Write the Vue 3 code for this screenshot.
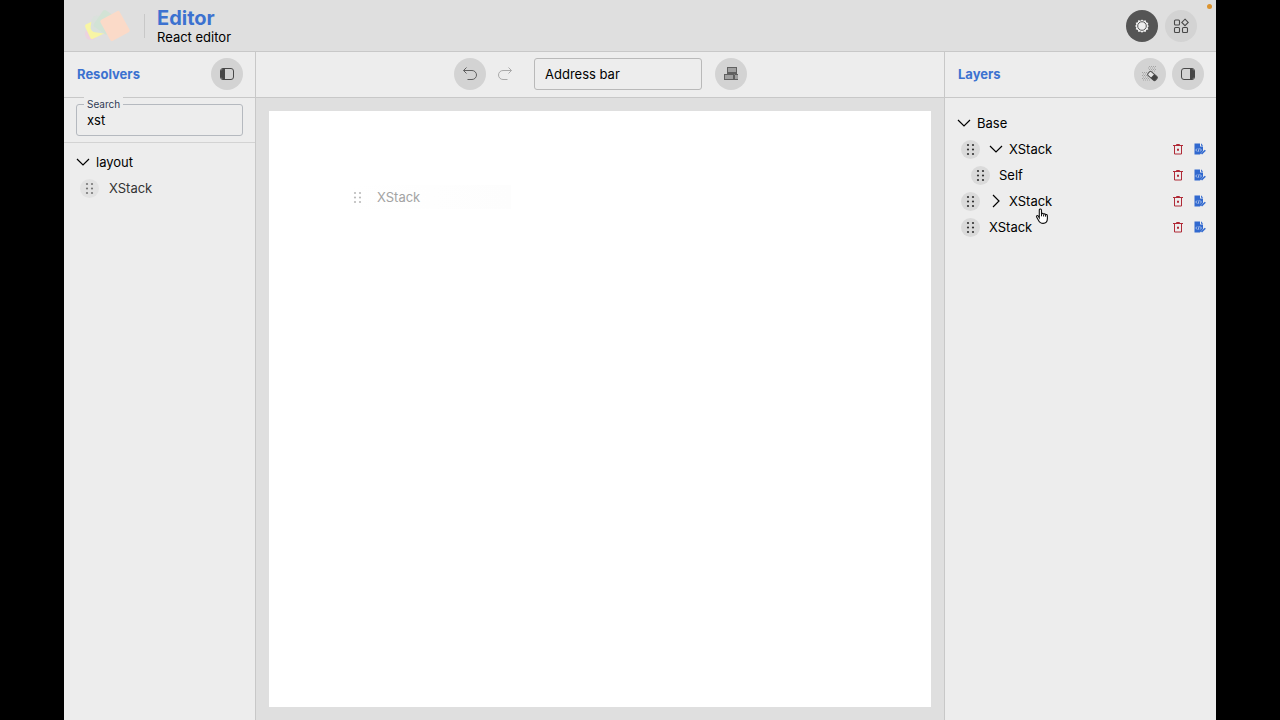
<script setup>
import { ref } from 'vue'

const search = ref('xst')
const address = ref('Address bar')
const layers = [
  { id: 1, name: 'XStack', depth: 1, toggle: 'down' },
  { id: 2, name: 'Self', depth: 2, toggle: null },
  { id: 3, name: 'XStack', depth: 1, toggle: 'right' },
  { id: 4, name: 'XStack', depth: 1, toggle: null },
]
const dots = [[5, 3], [10, 3], [5, 7.5], [10, 7.5], [5, 12], [10, 12]]
</script>

<template>
  <div class="stage">
    <div class="app">
      <header class="top">
        <svg class="logo" viewBox="0 0 50 36" aria-hidden="true">
          <circle cx="8" cy="26" r="6" fill="#ecd2df" />
          <rect x="4" y="13" width="17" height="16" rx="2" fill="#f8f5a4" transform="rotate(-25 12 21)" />
          <rect x="8" y="8" width="17" height="17" rx="5" fill="#dae1dc" transform="rotate(8 17 17)" />
          <rect x="14" y="4" width="17" height="20" rx="2" fill="#d2e3d5" transform="rotate(35 22 14)" />
          <rect x="21" y="6" width="22" height="24" rx="2" fill="#fbdac8" transform="rotate(-29 32 18)" />
        </svg>
        <div class="brand">
          <h1>Editor</h1>
          <p>React editor</p>
        </div>
        <div class="actions">
          <button class="round dark" aria-label="Theme">
            <svg width="16" height="16" viewBox="0 0 16 16" fill="none" stroke="currentColor">
              <path d="M8 1.4l1.5 1.4 2.1-.6.6 2.100 2.100.6-.6 2L15 8l-1.300 1.300.6 2.100-2.100.6-.6 2.100-2.100-.6L8 14.700l-1.500-1.300-2.100.6-.6-2.100-2.100-.6.6-2.100L1 8l1.300-1.200-.6-2 2.100-.6.6-2.100 2.100.6z" fill="currentColor" stroke="none" />
              <circle cx="8" cy="8" r="4.300" fill="#eee" stroke="#555" stroke-width="1" />
            </svg>
          </button>
          <button class="round" aria-label="Components">
            <svg width="16" height="16" viewBox="0 0 16 16" fill="none" stroke="currentColor" stroke-width="1.1">
              <rect x="1.5" y="2" width="5" height="5" rx="1" />
              <rect x="1.5" y="9.5" width="5" height="5" rx="1" />
              <rect x="9.5" y="9.5" width="5" height="5" rx="1" />
              <path d="M12 1.200l3.200 3.200L12 7.600 8.800 4.400z" />
            </svg>
          </button>
        </div>
        <span class="indicator"></span>
      </header>

      <div class="body">
        <aside class="panel left">
          <div class="bar">
            <h2>Resolvers</h2>
            <button class="round" aria-label="Toggle resolvers panel">
              <svg width="16" height="14" viewBox="0 0 16 14">
                <path d="M4 1.5h2v11H4L1.500 10V4z" fill="currentColor" />
                <rect x="1.5" y="1.5" width="13" height="11" rx="2.5" fill="none" stroke="currentColor" />
              </svg>
            </button>
          </div>
          <div class="filter">
            <div class="field">
              <label for="search">Search</label>
              <input id="search" v-model="search" type="text" />
            </div>
          </div>
          <div class="tree resolvers">
            <button class="row">
              <svg class="chev" viewBox="0 0 14 14"><path d="M1 4l6 6 6-6" /></svg>
              <span>layout</span>
            </button>
            <div class="row item faded">
              <span class="handle"><svg viewBox="0 0 15 15"><circle v-for="(d, i) in dots" :key="i" :cx="d[0]" :cy="d[1]" r="1.1" /></svg></span>
              <span class="name">XStack</span>
            </div>
          </div>
        </aside>

        <main class="center">
          <div class="bar tools">
            <button class="round" aria-label="Undo">
              <svg width="16" height="16" viewBox="0 0 16 16" fill="none" stroke="currentColor"><path d="M4.500 1.500l-3 3 3 3M1.500 4.500H10a4.500 4.500 0 0 1 0 9H5.500" /></svg>
            </button>
            <button class="plain" aria-label="Redo" disabled>
              <svg width="16" height="16" viewBox="0 0 16 16" fill="none" stroke="currentColor"><path d="M11.500 1.500l3 3-3 3M14.500 4.500H6a4.500 4.500 0 0 0 0 9h4.500" /></svg>
            </button>
            <input v-model="address" class="address" type="text" aria-label="Address" />
            <button class="round" aria-label="Viewport">
              <svg width="16" height="16" viewBox="0 0 16 16" fill="#a0a0a0" stroke="currentColor">
                <rect x="4.5" y="1.5" width="9" height="5" />
                <path d="M4 7.500h10" />
                <rect x="1.5" y="8.5" width="9" height="5" />
                <path d="M15 8.500h-3.500v5H15M1 13.500h14" />
              </svg>
            </button>
          </div>
          <div class="workspace">
            <div class="canvas">
              <div class="ghost">
                <svg viewBox="0 0 15 15"><circle v-for="(d, i) in dots" :key="i" :cx="d[0]" :cy="d[1]" r="1.1" /></svg>
                <span>XStack</span>
              </div>
            </div>
          </div>
        </main>

        <aside class="panel right">
          <div class="bar">
            <h2>Layers</h2>
            <div class="pair">
              <button class="round" aria-label="Clear layers">
                <svg width="16" height="16" viewBox="0 0 16 16">
                  <path d="M7 .5h8M6 2h8M7 3.500h8M10 5h4M0 6.500h5M1 8h4M0 9.500h5M1 11h6M0 12.500h7M1 14h7" fill="none" stroke="#999" stroke-width=".8" stroke-dasharray="1 1" />
                  <rect x="5.5" y="7.5" width="10" height="5" rx="1.500" fill="#e5e5e5" stroke="#505050" transform="rotate(42 10.500 10)" />
                  <path d="M10.500 7.500H14A1.500 1.500 0 0 1 15.500 9v2a1.500 1.500 0 0 1-1.500 1.500h-3.500z" fill="#444" transform="rotate(42 10.500 10)" />
                </svg>
              </button>
              <button class="round" aria-label="Toggle layers panel">
                <svg width="16" height="14" viewBox="0 0 16 14">
                  <path d="M10 1.500h2l2.500 2.500v6L12 12.500h-2z" fill="currentColor" />
                  <rect x="1.5" y="1.5" width="13" height="11" rx="2.5" fill="none" stroke="currentColor" />
                </svg>
              </button>
            </div>
          </div>
          <div class="tree layers">
            <button class="row">
              <svg class="chev" viewBox="0 0 14 14"><path d="M1 4l6 6 6-6" /></svg>
              <span>Base</span>
            </button>
            <div v-for="l in layers" :key="l.id" class="row item" :class="{ nested: l.depth === 2 }">
              <span class="handle"><svg viewBox="0 0 15 15"><circle v-for="(d, i) in dots" :key="i" :cx="d[0]" :cy="d[1]" r="1.1" /></svg></span>
              <button v-if="l.toggle" class="toggle" aria-label="Toggle layer">
                <svg class="chev" viewBox="0 0 14 14"><path :d="l.toggle === 'down' ? 'M1 4l6 6 6-6' : 'M4 1l6 6-6 6'" /></svg>
              </button>
              <span class="name">{{ l.name }}</span>
              <button class="mini red" aria-label="Delete layer">
                <svg viewBox="0 0 12 12" fill="none" stroke="currentColor"><path d="M1 2.500h10M4.500 2.500v-1h3v1M2.500 3v8h7V3" /><path d="M5 5.800h2v2H5z" fill="currentColor" stroke="none" /></svg>
              </button>
              <button class="mini blue" aria-label="Edit layer">
                <svg viewBox="0 0 12 12"><path d="M.5.500h5.500v3h3V8L6 11.500H.5z" fill="currentColor" /><path d="M7 .3L9.200 2.700H7z" fill="currentColor" /><path d="M3 5.500L1.800 7 3 8.500M6.200 5.500L7.400 7 6.200 8.500M5.100 5.200l-.9 3.600" fill="none" stroke="#dbe4f5" stroke-width=".7" /><path d="M7.500 11L11.300 7.200" fill="none" stroke="currentColor" stroke-width="1.600" /></svg>
              </button>
            </div>
            <svg class="cursor" viewBox="0 0 14 18" aria-hidden="true">
              <path d="M4.300 10.800V3.200c0-1.700 2.200-1.700 2.200 0v3.900c.2-1 1.900-1 2.100.3.300-.9 1.800-.7 2 .5.500-.7 1.800-.4 1.800 1v2.700c0 2.800-1.200 4.800-4.300 4.800-2.700 0-3.800-1.500-4.800-3.500L1.600 10c-.6-1.300.9-2 1.700-.8z" fill="#fff" stroke="#111" stroke-width="1.1" />
              <path d="M6.500 7v2.300M8.600 7.500v2M10.600 8v1.700" stroke="#111" fill="none" />
            </svg>
          </div>
        </aside>
      </div>
    </div>
  </div>
</template>

<style>
html, body { margin: 0; background: #000; }
</style>

<style scoped>
* { box-sizing: border-box; }
h1, h2, p { margin: 0; }
button, input { font: inherit; color: inherit; }
button { border: 0; padding: 0; background: none; }
svg { display: block; flex: none; }
.stage {
  min-height: 100vh;
  padding: 0 5%;
  display: flex;
  background: #000;
  color: #000;
  font: 13px/20px Inter, "Liberation Sans", sans-serif;
}
.app { flex: 1; display: flex; flex-direction: column; background: #ededed; }
.top {
  position: relative;
  height: 52px;
  display: flex;
  align-items: center;
  padding: 0 19px;
  background: #dfdfdf;
  border-bottom: 1px solid #c8c8c8;
}
.logo { width: 50px; height: 36px; }
.brand { margin-left: 11px; padding: 2px 0 0 13px; position: relative; }
.brand::before {
  content: "";
  position: absolute;
  left: 0;
  top: 8px;
  bottom: 8px;
  border-left: 1px solid #c8c8c8;
}
h1 { font-size: 20px; line-height: 20px; font-weight: 700; color: #3c72d0; }
.brand p { line-height: 18px; }
.actions { margin-left: auto; display: flex; gap: 7px; }
.indicator {
  position: absolute;
  right: 4px;
  top: 4px;
  width: 5px;
  height: 5px;
  border-radius: 50%;
  background: #dc9430;
}
.round {
  width: 32px;
  height: 32px;
  border-radius: 50%;
  display: grid;
  place-items: center;
  flex: none;
  background: #d3d3d3;
  color: #484848;
}
.round.dark { background: #555; color: #f0f0f0; }
.body { flex: 1; display: flex; }
.panel { flex: none; display: flex; flex-direction: column; }
.left { width: 192px; border-right: 1px solid #c8c8c8; }
.right { width: 272px; border-left: 1px solid #c8c8c8; }
.bar {
  height: 46px;
  padding: 0 12px 1px 13px;
  display: flex;
  align-items: center;
  justify-content: space-between;
  border-bottom: 1px solid #c8c8c8;
}
h2 { font-size: 13px; line-height: 20px; font-weight: 700; color: #3c72d0; }
.pair { display: flex; gap: 6px; }
.filter { padding: 6px 12px; border-bottom: 1px solid #d3d3d3; }
.field { position: relative; }
.field input, .address {
  display: block;
  width: 100%;
  height: 32px;
  padding: 0 10px;
  border: 1px solid #b5b9bf;
  border-radius: 3px;
  background: transparent;
  outline: 0;
}
.field label {
  position: absolute;
  left: 8px;
  top: -7px;
  padding: 0 3px;
  font-size: 10px;
  line-height: 14px;
  background: #ededed;
  color: #303b55;
}
.center { flex: 1; min-width: 0; display: flex; flex-direction: column; }
.tools { justify-content: center; }
.plain { width: 32px; height: 32px; display: grid; place-items: center; color: #aaa; margin: 0 13px 0 3px; }
.tools .round { color: #606060; }
.address { width: 168px; margin-right: 13px; border-color: #b9b9b9; }
.workspace { flex: 1; display: flex; padding: 13px; background: #dfdfdf; }
.canvas { flex: 1; position: relative; background: #fff; }
.ghost {
  position: absolute;
  left: 81px;
  top: 74px;
  width: 161px;
  height: 24px;
  display: flex;
  align-items: center;
  gap: 12px;
  color: #a3a3a3;
  background: linear-gradient(90deg, #fff, #fdfdfd);
}
.ghost svg { width: 15px; height: 15px; fill: #bbb; }
.tree { display: flex; flex-direction: column; gap: 6px; }
.resolvers { padding: 9px 12px; }
.layers { position: relative; padding: 15px 10px 15px 12px; }
.layers .row + .row { margin-top: 0; }
.row { height: 20px; display: flex; align-items: center; gap: 6px; text-align: left; }
.chev { width: 14px; height: 14px; fill: none; stroke: #000; stroke-width: 1.2; }
.item { padding-left: 4px; gap: 9px; }
.item.nested { padding-left: 14px; }
.resolvers .item { gap: 10px; }
.faded { color: #333; }
.handle {
  width: 19px;
  height: 19px;
  border-radius: 50%;
  display: grid;
  place-items: center;
  background: #dadada;
}
.handle svg { width: 15px; height: 15px; fill: #333; }
.faded .handle { background: #e2e2e2; }
.faded .handle svg { fill: #777; }
.toggle { margin-right: -3px; }
.layers .name { flex: 1; }
.mini { width: 12px; height: 12px; }
.mini + .mini { margin-left: 1px; }
.red { color: #b02a37; }
.blue { color: #3169cf; }
.cursor { position: absolute; left: 90px; top: 109px; width: 14px; height: 18px; }
</style>
